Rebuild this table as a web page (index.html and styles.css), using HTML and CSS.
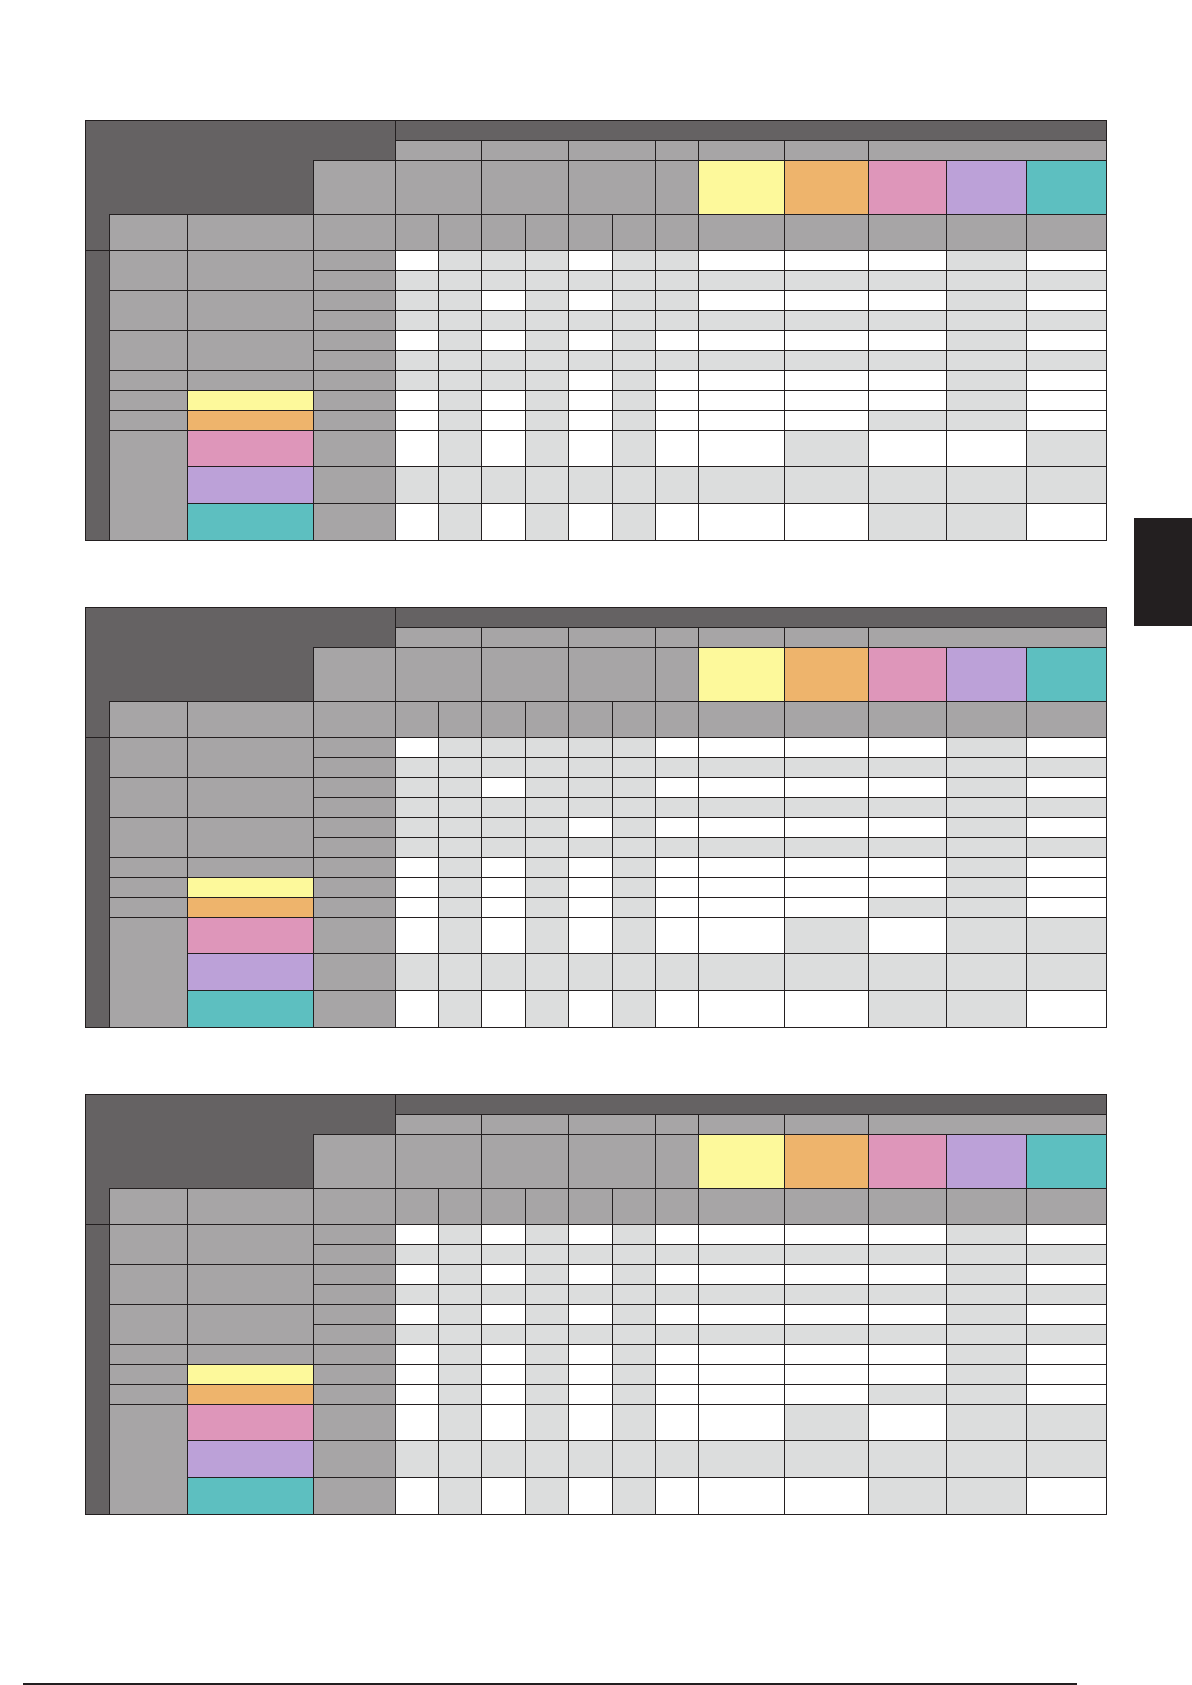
FILE: index.html
```html
<!DOCTYPE html>
<html lang="en">
<head>
<meta charset="utf-8">
<title>Tables</title>
<link rel="stylesheet" href="styles.css">
</head>
<body>
<div class="page">
  <div class="sheet">
    <div class="tables">

      <!-- TABLE 1 -->
      <div class="grid">
        <div class="dk dk-a"></div>
        <div class="dk band"></div>
        <div class="h2 s2"></div><div class="h2 s2"></div><div class="h2 s2"></div><div class="h2"></div><div class="h2"></div><div class="h2"></div><div class="h2 s3"></div>
        <div class="dk dk-b"></div>
        <div class="h3"></div><div class="h3 s2"></div><div class="h3 s2"></div><div class="h3 s2"></div><div class="h3"></div><div class="h3 yel"></div><div class="h3 org"></div><div class="h3 pnk"></div><div class="h3 pur"></div><div class="h3 tea"></div>
        <div class="dk dk-c"></div>
        <div class="h4"></div><div class="h4"></div><div class="h4"></div><div class="h4"></div><div class="h4"></div><div class="h4"></div><div class="h4"></div><div class="h4"></div><div class="h4"></div><div class="h4"></div><div class="h4"></div><div class="h4"></div><div class="h4"></div><div class="h4"></div><div class="h4"></div>
        <div class="dk dcol"></div>
        <div class="a1"></div><div class="a2"></div><div class="a3"></div><div class="a4"></div><div class="a5"></div><div class="a6"></div><div class="a7"></div>
        <div class="b1"></div><div class="b2"></div><div class="b3"></div><div class="b4"></div><div class="b5 yel"></div><div class="b6 org"></div><div class="b7 pnk"></div><div class="b8 pur"></div><div class="b9 tea"></div>
        <div class="c"></div><div class="w"></div><div class="g"></div><div class="g"></div><div class="g"></div><div class="w"></div><div class="g"></div><div class="g"></div><div class="w"></div><div class="w"></div><div class="w"></div><div class="g"></div><div class="w"></div>
        <div class="c"></div><div class="g"></div><div class="g"></div><div class="g"></div><div class="g"></div><div class="g"></div><div class="g"></div><div class="g"></div><div class="g"></div><div class="g"></div><div class="g"></div><div class="g"></div><div class="g"></div>
        <div class="c"></div><div class="g"></div><div class="g"></div><div class="w"></div><div class="g"></div><div class="w"></div><div class="g"></div><div class="g"></div><div class="w"></div><div class="w"></div><div class="w"></div><div class="g"></div><div class="w"></div>
        <div class="c"></div><div class="g"></div><div class="g"></div><div class="g"></div><div class="g"></div><div class="g"></div><div class="g"></div><div class="g"></div><div class="g"></div><div class="g"></div><div class="g"></div><div class="g"></div><div class="g"></div>
        <div class="c"></div><div class="w"></div><div class="g"></div><div class="w"></div><div class="g"></div><div class="w"></div><div class="g"></div><div class="w"></div><div class="w"></div><div class="w"></div><div class="w"></div><div class="g"></div><div class="w"></div>
        <div class="c"></div><div class="g"></div><div class="g"></div><div class="g"></div><div class="g"></div><div class="g"></div><div class="g"></div><div class="g"></div><div class="g"></div><div class="g"></div><div class="g"></div><div class="g"></div><div class="g"></div>
        <div class="c"></div><div class="g"></div><div class="g"></div><div class="g"></div><div class="g"></div><div class="w"></div><div class="g"></div><div class="w"></div><div class="w"></div><div class="w"></div><div class="w"></div><div class="g"></div><div class="w"></div>
        <div class="c"></div><div class="w"></div><div class="g"></div><div class="w"></div><div class="g"></div><div class="w"></div><div class="g"></div><div class="w"></div><div class="w"></div><div class="w"></div><div class="w"></div><div class="g"></div><div class="w"></div>
        <div class="c"></div><div class="w"></div><div class="g"></div><div class="w"></div><div class="g"></div><div class="w"></div><div class="g"></div><div class="w"></div><div class="w"></div><div class="w"></div><div class="g"></div><div class="g"></div><div class="w"></div>
        <div class="c"></div><div class="w"></div><div class="g"></div><div class="w"></div><div class="g"></div><div class="w"></div><div class="g"></div><div class="w"></div><div class="w"></div><div class="g"></div><div class="w"></div><div class="w"></div><div class="g"></div>
        <div class="c"></div><div class="g"></div><div class="g"></div><div class="g"></div><div class="g"></div><div class="g"></div><div class="g"></div><div class="g"></div><div class="g"></div><div class="g"></div><div class="g"></div><div class="g"></div><div class="g"></div>
        <div class="c"></div><div class="w"></div><div class="g"></div><div class="w"></div><div class="g"></div><div class="w"></div><div class="g"></div><div class="w"></div><div class="w"></div><div class="w"></div><div class="g"></div><div class="g"></div><div class="w"></div>
      </div>

      <!-- TABLE 2 -->
      <div class="grid">
        <div class="dk dk-a"></div>
        <div class="dk band"></div>
        <div class="h2 s2"></div><div class="h2 s2"></div><div class="h2 s2"></div><div class="h2"></div><div class="h2"></div><div class="h2"></div><div class="h2 s3"></div>
        <div class="dk dk-b"></div>
        <div class="h3"></div><div class="h3 s2"></div><div class="h3 s2"></div><div class="h3 s2"></div><div class="h3"></div><div class="h3 yel"></div><div class="h3 org"></div><div class="h3 pnk"></div><div class="h3 pur"></div><div class="h3 tea"></div>
        <div class="dk dk-c"></div>
        <div class="h4"></div><div class="h4"></div><div class="h4"></div><div class="h4"></div><div class="h4"></div><div class="h4"></div><div class="h4"></div><div class="h4"></div><div class="h4"></div><div class="h4"></div><div class="h4"></div><div class="h4"></div><div class="h4"></div><div class="h4"></div><div class="h4"></div>
        <div class="dk dcol"></div>
        <div class="a1"></div><div class="a2"></div><div class="a3"></div><div class="a4"></div><div class="a5"></div><div class="a6"></div><div class="a7"></div>
        <div class="b1"></div><div class="b2"></div><div class="b3"></div><div class="b4"></div><div class="b5 yel"></div><div class="b6 org"></div><div class="b7 pnk"></div><div class="b8 pur"></div><div class="b9 tea"></div>
        <div class="c"></div><div class="w"></div><div class="g"></div><div class="g"></div><div class="g"></div><div class="g"></div><div class="g"></div><div class="w"></div><div class="w"></div><div class="w"></div><div class="w"></div><div class="g"></div><div class="w"></div>
        <div class="c"></div><div class="g"></div><div class="g"></div><div class="g"></div><div class="g"></div><div class="g"></div><div class="g"></div><div class="g"></div><div class="g"></div><div class="g"></div><div class="g"></div><div class="g"></div><div class="g"></div>
        <div class="c"></div><div class="g"></div><div class="g"></div><div class="w"></div><div class="g"></div><div class="g"></div><div class="g"></div><div class="w"></div><div class="w"></div><div class="w"></div><div class="w"></div><div class="g"></div><div class="w"></div>
        <div class="c"></div><div class="g"></div><div class="g"></div><div class="g"></div><div class="g"></div><div class="g"></div><div class="g"></div><div class="g"></div><div class="g"></div><div class="g"></div><div class="g"></div><div class="g"></div><div class="g"></div>
        <div class="c"></div><div class="g"></div><div class="g"></div><div class="g"></div><div class="g"></div><div class="w"></div><div class="g"></div><div class="w"></div><div class="w"></div><div class="w"></div><div class="w"></div><div class="g"></div><div class="w"></div>
        <div class="c"></div><div class="g"></div><div class="g"></div><div class="g"></div><div class="g"></div><div class="g"></div><div class="g"></div><div class="g"></div><div class="g"></div><div class="g"></div><div class="g"></div><div class="g"></div><div class="g"></div>
        <div class="c"></div><div class="w"></div><div class="g"></div><div class="w"></div><div class="g"></div><div class="w"></div><div class="g"></div><div class="w"></div><div class="w"></div><div class="w"></div><div class="w"></div><div class="g"></div><div class="w"></div>
        <div class="c"></div><div class="w"></div><div class="g"></div><div class="w"></div><div class="g"></div><div class="w"></div><div class="g"></div><div class="w"></div><div class="w"></div><div class="w"></div><div class="w"></div><div class="g"></div><div class="w"></div>
        <div class="c"></div><div class="w"></div><div class="g"></div><div class="w"></div><div class="g"></div><div class="w"></div><div class="g"></div><div class="w"></div><div class="w"></div><div class="w"></div><div class="g"></div><div class="g"></div><div class="w"></div>
        <div class="c"></div><div class="w"></div><div class="g"></div><div class="w"></div><div class="g"></div><div class="w"></div><div class="g"></div><div class="w"></div><div class="w"></div><div class="g"></div><div class="w"></div><div class="g"></div><div class="g"></div>
        <div class="c"></div><div class="g"></div><div class="g"></div><div class="g"></div><div class="g"></div><div class="g"></div><div class="g"></div><div class="g"></div><div class="g"></div><div class="g"></div><div class="g"></div><div class="g"></div><div class="g"></div>
        <div class="c"></div><div class="w"></div><div class="g"></div><div class="w"></div><div class="g"></div><div class="w"></div><div class="g"></div><div class="w"></div><div class="w"></div><div class="w"></div><div class="g"></div><div class="g"></div><div class="w"></div>
      </div>

      <!-- TABLE 3 -->
      <div class="grid">
        <div class="dk dk-a"></div>
        <div class="dk band"></div>
        <div class="h2 s2"></div><div class="h2 s2"></div><div class="h2 s2"></div><div class="h2"></div><div class="h2"></div><div class="h2"></div><div class="h2 s3"></div>
        <div class="dk dk-b"></div>
        <div class="h3"></div><div class="h3 s2"></div><div class="h3 s2"></div><div class="h3 s2"></div><div class="h3"></div><div class="h3 yel"></div><div class="h3 org"></div><div class="h3 pnk"></div><div class="h3 pur"></div><div class="h3 tea"></div>
        <div class="dk dk-c"></div>
        <div class="h4"></div><div class="h4"></div><div class="h4"></div><div class="h4"></div><div class="h4"></div><div class="h4"></div><div class="h4"></div><div class="h4"></div><div class="h4"></div><div class="h4"></div><div class="h4"></div><div class="h4"></div><div class="h4"></div><div class="h4"></div><div class="h4"></div>
        <div class="dk dcol"></div>
        <div class="a1"></div><div class="a2"></div><div class="a3"></div><div class="a4"></div><div class="a5"></div><div class="a6"></div><div class="a7"></div>
        <div class="b1"></div><div class="b2"></div><div class="b3"></div><div class="b4"></div><div class="b5 yel"></div><div class="b6 org"></div><div class="b7 pnk"></div><div class="b8 pur"></div><div class="b9 tea"></div>
        <div class="c"></div><div class="w"></div><div class="g"></div><div class="w"></div><div class="g"></div><div class="w"></div><div class="g"></div><div class="w"></div><div class="w"></div><div class="w"></div><div class="w"></div><div class="g"></div><div class="w"></div>
        <div class="c"></div><div class="g"></div><div class="g"></div><div class="g"></div><div class="g"></div><div class="g"></div><div class="g"></div><div class="g"></div><div class="g"></div><div class="g"></div><div class="g"></div><div class="g"></div><div class="g"></div>
        <div class="c"></div><div class="w"></div><div class="g"></div><div class="w"></div><div class="g"></div><div class="w"></div><div class="g"></div><div class="w"></div><div class="w"></div><div class="w"></div><div class="w"></div><div class="g"></div><div class="w"></div>
        <div class="c"></div><div class="g"></div><div class="g"></div><div class="g"></div><div class="g"></div><div class="g"></div><div class="g"></div><div class="g"></div><div class="g"></div><div class="g"></div><div class="g"></div><div class="g"></div><div class="g"></div>
        <div class="c"></div><div class="w"></div><div class="g"></div><div class="w"></div><div class="g"></div><div class="w"></div><div class="g"></div><div class="w"></div><div class="w"></div><div class="w"></div><div class="w"></div><div class="g"></div><div class="w"></div>
        <div class="c"></div><div class="g"></div><div class="g"></div><div class="g"></div><div class="g"></div><div class="g"></div><div class="g"></div><div class="g"></div><div class="g"></div><div class="g"></div><div class="g"></div><div class="g"></div><div class="g"></div>
        <div class="c"></div><div class="w"></div><div class="g"></div><div class="w"></div><div class="g"></div><div class="w"></div><div class="g"></div><div class="w"></div><div class="w"></div><div class="w"></div><div class="w"></div><div class="g"></div><div class="w"></div>
        <div class="c"></div><div class="w"></div><div class="g"></div><div class="w"></div><div class="g"></div><div class="w"></div><div class="g"></div><div class="w"></div><div class="w"></div><div class="w"></div><div class="w"></div><div class="g"></div><div class="w"></div>
        <div class="c"></div><div class="w"></div><div class="g"></div><div class="w"></div><div class="g"></div><div class="w"></div><div class="g"></div><div class="w"></div><div class="w"></div><div class="w"></div><div class="g"></div><div class="g"></div><div class="w"></div>
        <div class="c"></div><div class="w"></div><div class="g"></div><div class="w"></div><div class="g"></div><div class="w"></div><div class="g"></div><div class="w"></div><div class="w"></div><div class="g"></div><div class="w"></div><div class="g"></div><div class="g"></div>
        <div class="c"></div><div class="g"></div><div class="g"></div><div class="g"></div><div class="g"></div><div class="g"></div><div class="g"></div><div class="g"></div><div class="g"></div><div class="g"></div><div class="g"></div><div class="g"></div><div class="g"></div>
        <div class="c"></div><div class="w"></div><div class="g"></div><div class="w"></div><div class="g"></div><div class="w"></div><div class="g"></div><div class="w"></div><div class="w"></div><div class="w"></div><div class="g"></div><div class="g"></div><div class="w"></div>
      </div>

    </div>
    <div class="tab"></div>
  </div>
  <div class="rule"></div>
</div>
</body>
</html>
```

FILE: styles.css
```css
* {
  box-sizing: border-box;
}

html, body {
  margin: 0;
  padding: 0;
  background: #ffffff;
  font-family: "Liberation Sans", Arial, sans-serif;
}

.page {
  width: 1192px;
  height: 1685px;
  padding-top: 120px;
  overflow: hidden;
}

.sheet {
  display: flex;
  align-items: flex-start;
  padding-left: 85px;
}

.tables {
  display: flex;
  flex-direction: column;
  gap: 66px;
}

.grid {
  display: grid;
  width: max-content;
  grid-template-columns: 24px 78px 126px 82px 43px 43px 44px 43px 44px 43px 43px 86px 84px 78px 80px 80px;
  grid-template-rows: 20px 20px 54px 36px repeat(9, 20px) 36px 37px 37px;
  border-right: 1px solid #231f20;
  border-bottom: 1px solid #231f20;
  background: #a7a5a6;
}

.grid > div {
  border-top: 1px solid #231f20;
  border-left: 1px solid #231f20;
  background: #a7a5a6;
}

/* dark header areas */
.grid > .dk {
  background: #656263;
}

.dk-a { grid-area: 1 / 1 / 3 / 5; }
.grid > .dk-b { grid-area: 3 / 1 / 4 / 4; border-top: none; }
.grid > .dk-c { grid-area: 4 / 1 / 5 / 2; border-top: none; }
.band { grid-area: 1 / 5 / 2 / 17; }
.dcol { grid-area: 5 / 1 / 17 / 2; }

/* header rows placed in order */
.h2 { grid-row: 2; }
.h3 { grid-row: 3; }
.h4 { grid-row: 4; }
.s2 { grid-column: span 2; }
.s3 { grid-column: span 3; }

/* first body column groups */
.a1 { grid-area: 5 / 2 / 7 / 3; }
.a2 { grid-area: 7 / 2 / 9 / 3; }
.a3 { grid-area: 9 / 2 / 11 / 3; }
.a4 { grid-area: 11 / 2 / 12 / 3; }
.a5 { grid-area: 12 / 2 / 13 / 3; }
.a6 { grid-area: 13 / 2 / 14 / 3; }
.a7 { grid-area: 14 / 2 / 17 / 3; }

.b1 { grid-area: 5 / 3 / 7 / 4; }
.b2 { grid-area: 7 / 3 / 9 / 4; }
.b3 { grid-area: 9 / 3 / 11 / 4; }
.b4 { grid-area: 11 / 3 / 12 / 4; }
.b5 { grid-area: 12 / 3 / 13 / 4; }
.b6 { grid-area: 13 / 3 / 14 / 4; }
.b7 { grid-area: 14 / 3 / 15 / 4; }
.b8 { grid-area: 15 / 3 / 16 / 4; }
.b9 { grid-area: 16 / 3 / 17 / 4; }

.c { grid-column: 4; }

/* data cells */
.grid > .w { background: #ffffff; }
.grid > .g { background: #dcdddd; }

/* accent colours */
.grid > .yel { background: #fdf99b; }
.grid > .org { background: #eeb46c; }
.grid > .pnk { background: #de96ba; }
.grid > .pur { background: #bca1d8; }
.grid > .tea { background: #5dbfc0; }

.tab {
  flex: none;
  width: 58px;
  height: 108px;
  margin-left: 27px;
  margin-top: 398px;
  background: #231f20;
}

.rule {
  margin-top: 168px;
  margin-left: 23px;
  width: 1054px;
  height: 2px;
  background: #231f20;
}
```
